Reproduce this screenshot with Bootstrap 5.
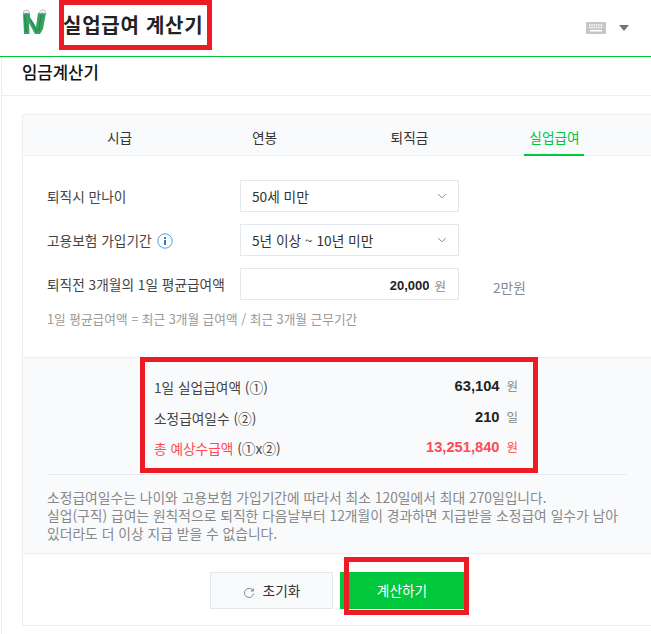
<!DOCTYPE html>
<html lang="ko">
<head>
<meta charset="utf-8">
<title>실업급여 계산기</title>
<link href="https://cdn.jsdelivr.net/npm/bootstrap@5.3.0/dist/css/bootstrap.min.css" rel="stylesheet">
<style>
html,body{margin:0;height:634px;overflow:hidden;background:#fff}
body{font-family:"Noto Sans CJK KR","Liberation Sans",sans-serif;font-size:13.7px;color:#333;position:relative;line-height:18px}
.num{font-family:"Liberation Sans","Noto Sans CJK KR",sans-serif}
.topbar{height:57px;border-bottom:1px solid #00c73c;padding:0 22px 0 22px}
.logo-mark{width:26px;height:28px;margin-top:-10px}
.app-title{font-size:20px;font-weight:700;color:#222;margin:-6px 0 0 15px;line-height:28px;letter-spacing:.75px}
.kb-caret{width:0;height:0;border:5px solid transparent;border-top:6px solid #777;border-bottom:0;margin-left:13px}
.sheet{border-left:1px solid #eee;margin-left:1px;height:577px}
.sheet-head{height:39px;border-bottom:1px solid #eee;padding:6px 0 0 20px;font-size:16.7px;font-weight:500;color:#111;line-height:18px}
.calc-box{margin:18px 0 0 20px;width:630px;height:512px;border:1px solid #eee}
.tabbar{height:41px;background:#f9fafc;border-bottom:1px solid #eee;padding:0 24px}
.tab-item{width:145px;height:40px;display:flex;align-items:center;justify-content:center;color:#333;position:relative;padding-top:3px;text-decoration:none}
.tab-on{color:#00c73c}
.tab-on::after{content:"";position:absolute;left:42px;width:60px;bottom:-1px;height:2px;background:#00c73c}
.form-zone{padding:24px 24px 0;height:201px}
.form-line{display:flex;align-items:center;height:32px;margin-bottom:12px}
.form-cap{width:193px;color:#444;white-space:nowrap}
.info-dot{display:inline-block;vertical-align:-3px;margin-left:2px}
.calc-select.form-select{width:219px;height:32px;border:1px solid #e4e7ee;border-radius:0;font-size:13.7px;color:#333;padding:0 30px 0 11px;background-image:url("data:image/svg+xml,%3csvg xmlns='http://www.w3.org/2000/svg' viewBox='0 0 16 16'%3e%3cpath fill='none' stroke='%23888' stroke-width='1.6' d='M2 5l6 6 6-6'/%3e%3c/svg%3e");background-position:right 11px center;background-size:10px 10px;line-height:30px;font-family:inherit}
.amount-box{width:219px;height:32px;border:1px solid #e4e7ee;padding:3px 12px 0 0}
.amount-input{border:0;outline:0;flex:1;min-width:0;text-align:right;font-weight:700;font-size:13px;color:#222;font-family:"Liberation Sans",sans-serif;padding:0 5px 0 0}
.unit-soft{color:#888;font-size:12.5px}
.amount-words{color:#888;margin-left:34px;padding-top:5px}
.hint-line{color:#999;font-size:12.7px;margin-top:-2px}
.result-zone{background:#f9fafc;border-top:1px solid #eee;border-bottom:1px solid #eee;height:197px;padding:0 24px}
.result-inner{margin-left:107px;width:364px;padding-top:18px;height:116px}
.result-line{display:flex;justify-content:space-between;height:30.5px;color:#444}
.result-cap{padding-top:2px}
.result-val{font-weight:700;font-size:14.7px;color:#222;margin-right:7px}
.result-red,.result-red .result-val,.result-red .unit-soft{color:#ff4b55}
.result-red .mix{color:#444}
.note-text{border-top:1px solid #e8eaef;padding-top:13px;color:#888;font-size:13.8px;line-height:18px}
.btn-zone{padding-top:18px;gap:7px}
.reset-btn.btn{width:123px;height:37px;border:1px solid #e4e7ee;background:#f9fafc;border-radius:0;color:#333;font-size:13.7px;padding:0;margin-left:187px}
.go-btn.btn{width:124px;height:37px;border:0;background:#00c73c;border-radius:0;color:#fff;font-size:13.7px;padding:0}
.red-mark{position:absolute;border:5px solid #ed1c24;pointer-events:none}
.mark-a{left:59px;top:0;width:153px;height:50px}
.mark-b{left:140px;top:357px;width:398px;height:116px}
.mark-c{left:344px;top:557px;width:125px;height:58px}
</style>
</head>
<body>
<header class="topbar d-flex align-items-center">
  <svg class="logo-mark" viewBox="0 0 26 28" aria-hidden="true">
    <path d="M1 4 L8 4 L8 8 L14 18 L16 4 L24 4 L21 20 L18 25 L13 25 L7 14 L7.5 25 L2 25 Z" fill="#36a262"/>
    <path d="M3 6 L4 23 M19 6 L17 22 M9 11 L15 23" stroke="#237f49" stroke-width="1.4" fill="none" opacity=".7"/>
    <path d="M1 5 Q1 1 4 1 Q8 1 8 5 Q4 3 1 5Z M17 5 Q18 0 22 1 Q24 2 24 5 Q20 3 17 5Z" fill="#f3f3f3" stroke="#999" stroke-width=".6"/>
  </svg>
  <div class="app-title">실업급여 계산기</div>
  <div class="ms-auto d-flex align-items-center">
    <svg width="20" height="12" viewBox="0 0 20 12" aria-hidden="true">
      <rect width="20" height="12" fill="#c6c6c6"/>
      <path d="M3 3h14M3 5.5h14" stroke="#fff" stroke-width="1.4" stroke-dasharray="1.4 .9"/>
      <rect x="4" y="8" width="12" height="1.5" fill="#fff"/>
    </svg>
    <span class="kb-caret"></span>
  </div>
</header>
<main class="sheet">
  <div class="sheet-head">임금계산기</div>
  <section class="calc-box">
    <nav class="nav tabbar flex-nowrap">
      <a class="tab-item" href="#">시급</a>
      <a class="tab-item" href="#">연봉</a>
      <a class="tab-item" href="#">퇴직금</a>
      <a class="tab-item tab-on" href="#">실업급여</a>
    </nav>
    <div class="form-zone">
      <div class="form-line">
        <div class="form-cap">퇴직시 만나이</div>
        <select class="form-select calc-select"><option>50세 미만</option></select>
      </div>
      <div class="form-line">
        <div class="form-cap">고용보험 가입기간 <svg class="info-dot" width="16" height="16" viewBox="0 0 16 16" aria-hidden="true"><circle cx="8" cy="8" r="7.2" fill="none" stroke="#5b9bd5" stroke-width="1"/><rect x="7" y="7" width="2" height="5" fill="#2f7fc8"/><rect x="7" y="4" width="2" height="2" fill="#2f7fc8"/></svg></div>
        <select class="form-select calc-select"><option>5년 이상 ~ 10년 미만</option></select>
      </div>
      <div class="form-line">
        <div class="form-cap">퇴직전 3개월의 1일 평균급여액</div>
        <div class="amount-box d-flex align-items-center">
          <input class="amount-input" type="text" value="20,000">
          <span class="unit-soft">원</span>
        </div>
        <span class="amount-words">2만원</span>
      </div>
      <div class="hint-line">1일 평균급여액 = 최근 3개월 급여액 / 최근 3개월 근무기간</div>
    </div>
    <div class="result-zone">
      <div class="result-inner">
        <div class="result-line"><span class="result-cap">1일 실업급여액 (①)</span><span><span class="result-val num">63,104</span><span class="unit-soft">원</span></span></div>
        <div class="result-line"><span class="result-cap">소정급여일수 (②)</span><span><span class="result-val num">210</span><span class="unit-soft">일</span></span></div>
        <div class="result-line result-red"><span class="result-cap">총 예상수급액 <span class="mix">(①x②)</span></span><span><span class="result-val num">13,251,840</span><span class="unit-soft">원</span></span></div>
      </div>
      <div class="note-text">소정급여일수는 나이와 고용보험 가입기간에 따라서 최소 120일에서 최대 270일입니다.<br>실업(구직) 급여는 원칙적으로 퇴직한 다음날부터 12개월이 경과하면 지급받을 소정급여 일수가 남아 있더라도 더 이상 지급 받을 수 없습니다.</div>
    </div>
    <div class="d-flex btn-zone">
      <button class="btn reset-btn" type="button"><svg width="12" height="12" viewBox="0 0 12 12" class="me-2" aria-hidden="true"><path d="M10.2 4A4.6 4.6 0 1 0 10.6 6.5" fill="none" stroke="#888" stroke-width="1"/><path d="M10.8 1v3.4H7.6z" fill="#888"/></svg>초기화</button>
      <button class="btn go-btn" type="button">계산하기</button>
    </div>
  </section>
</main>
<div class="red-mark mark-a"></div>
<div class="red-mark mark-b"></div>
<div class="red-mark mark-c"></div>
<script src="https://cdn.jsdelivr.net/npm/bootstrap@5.3.0/dist/js/bootstrap.bundle.min.js"></script>
</body>
</html>
